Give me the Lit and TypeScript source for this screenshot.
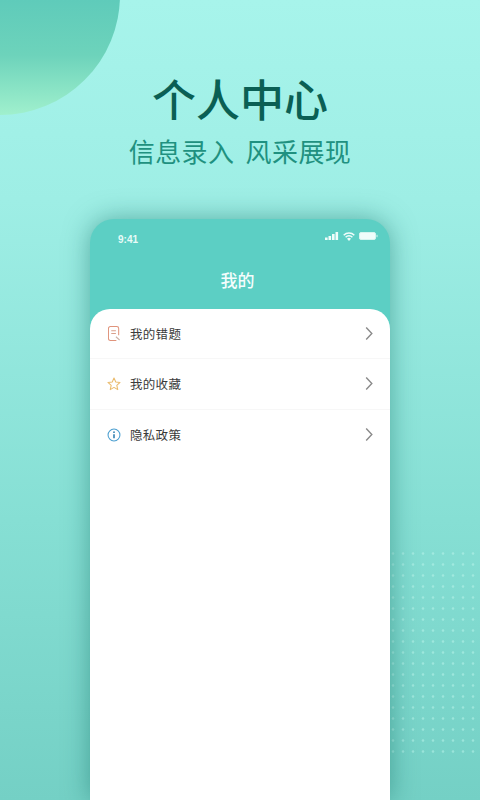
import { LitElement, html, css } from "lit";
import { customElement } from "lit/decorators.js";

const chevron = html`<svg class="chev" width="10" height="15" viewBox="0 0 10 16"><path d="M2 1.500 L8 8 L2 14.500" fill="none" stroke="#8a8a8a" stroke-width="1.500"/></svg>`;

const book = html`<svg width="13" height="15" viewBox="0 0 14 16" fill="none" stroke="#e0947c" stroke-width="1.100"><path d="M11.500 10V2.500a2 2 0 0 0-2-2h-7a2 2 0 0 0-2 2v11a2 2 0 0 0 2 2H9"/><path d="M3.500 5H8.500M3.500 8H8.500" stroke="#d9a08c"/><path d="M8.500 11.500 L12.500 15" stroke="#c9b0a5"/></svg>`;

const star = html`<svg width="14" height="14" viewBox="0 0 16 16" fill="none" stroke="#eabb6c" stroke-width="1.200" stroke-linejoin="round"><path d="M8 1.200 L10 5.700 L14.900 6.200 L11.200 9.500 L12.300 14.400 L8 11.900 L3.700 14.400 L4.800 9.500 L1.100 6.200 L6 5.700 Z"/></svg>`;

const info = html`<svg width="14" height="14" viewBox="0 0 16 16" fill="none"><circle cx="8" cy="8" r="6.800" stroke="#4b9fd0" stroke-width="1.200"/><circle cx="8" cy="4.800" r="1" fill="#2f7fb0"/><path d="M8 7v4.800" stroke="#2f7fb0" stroke-width="1.800"/></svg>`;

const rows = [
  { icon: book, label: "我的错题" },
  { icon: star, label: "我的收藏" },
  { icon: info, label: "隐私政策" },
];

@customElement("app-root")
export class AppRoot extends LitElement {
  static styles = css`
    :host {
      display: block;
      width: 480px;
      height: 800px;
      overflow: hidden;
      font-family: "Noto Sans CJK SC", "Liberation Sans", sans-serif;
    }
    .page {
      position: relative;
      box-sizing: border-box;
      width: 480px;
      height: 800px;
      overflow: hidden;
      display: flex;
      flex-direction: column;
      align-items: center;
      padding-top: 70px;
      background: linear-gradient(180deg, #a7f4eb 0%, #9eeee5 25%, #86dfd4 65%, #74d0c5 100%);
    }
    .circle {
      position: absolute;
      left: -120px;
      top: -125px;
      width: 240px;
      height: 240px;
      border-radius: 50%;
      background: linear-gradient(180deg, #5fcbba 52%, #6dd3bb 75%, #a0f0cd 100%);
    }
    .dots {
      position: absolute;
      left: 388px;
      top: 548px;
      width: 92px;
      height: 209px;
      background-image: radial-gradient(circle at 5px 5.500px, rgba(190, 245, 235, 0.5) 0, rgba(190, 245, 235, 0.5) 0.800px, transparent 1.700px);
      background-size: 10px 11px;
    }
    h1 {
      position: relative;
      margin: 0;
      font-size: 44px;
      line-height: 56px;
      font-weight: 500;
      letter-spacing: 0;
      color: #0a5f54;
    }
    h2 {
      position: relative;
      margin: 5px 0 0;
      font-size: 26px;
      line-height: 40px;
      font-weight: 400;
      letter-spacing: 0.400px;
      word-spacing: 5px;
      color: #1f9180;
      white-space: pre;
    }
    .phone {
      position: relative;
      margin-top: 48px;
      width: 300px;
      flex: 1;
      border-radius: 24px 24px 0 0;
      background: #5ccfc4;
      box-shadow: 0 0 26px rgba(20, 110, 100, 0.5);
      display: flex;
      flex-direction: column;
    }
    .status {
      height: 34px;
      box-sizing: border-box;
      padding: 6px 12px 0 28px;
      display: flex;
      align-items: center;
      justify-content: space-between;
      color: #e8fbf8;
      font-family: "Liberation Sans", sans-serif;
      font-size: 10px;
      font-weight: 700;
    }
    .status-icons {
      display: flex;
      align-items: center;
      gap: 4px;
      margin-top: -6px;
    }
    .title {
      height: 56px;
      display: flex;
      align-items: center;
      justify-content: center;
      color: #f4fdfc;
      font-size: 17px;
      font-weight: 500;
      padding: 0 5px 4px 0;
      box-sizing: border-box;
    }
    .sheet {
      flex: 1;
      background: #fff;
      border-radius: 20px 20px 0 0;
    }
    .row {
      height: 50.300px;
      box-sizing: border-box;
      padding: 0 16px 0 17px;
      display: flex;
      align-items: center;
      border-bottom: 1px solid #f7f7f7;
      font-size: 12.500px;
      font-weight: 400;
      color: #3a3a3a;
    }
    .row:last-child {
      border-bottom: none;
    }
    .icon {
      width: 14px;
      height: 16px;
      display: flex;
      align-items: center;
      justify-content: center;
      margin: 0 9px 0 0;
    }
    .label {
      flex: 1;
      letter-spacing: 0.300px;
    }
  `;

  render() {
    return html`
      <div class="page">
        <div class="circle"></div>
        <div class="dots"></div>
        <h1>个人中心</h1>
        <h2>信息录入 风采展现</h2>
        <div class="phone">
          <div class="status">
            <span>9:41</span>
            <span class="status-icons">
              <svg width="14" height="8" viewBox="0 0 14 8" fill="#f0fdfb"><rect x="0" y="5.500" width="2.600" height="2.500"/><rect x="3.500" y="4" width="2.600" height="4"/><rect x="7" y="2" width="2.600" height="6"/><rect x="10.500" y="0" width="2.600" height="8"/></svg>
              <svg width="12" height="9" viewBox="0 0 12 9" fill="none" stroke="#f0fdfb" stroke-width="1.500"><path d="M0.700 3.200A7.500 7.500 0 0 1 11.300 3.200"/><path d="M2.600 5.200A4.800 4.800 0 0 1 9.400 5.200"/><path d="M6 9 L4 6.800 A2.800 2.800 0 0 1 8 6.800 Z" fill="#f0fdfb" stroke="none"/></svg>
              <svg width="19" height="8" viewBox="0 0 19 8"><rect x="0.500" y="0.500" width="16" height="7" rx="1.500" fill="#f0fdfb" stroke="#d5f5f0"/><rect x="17.500" y="2.800" width="1" height="2.400" fill="#d5f5f0"/></svg>
            </span>
          </div>
          <div class="title">我的</div>
          <div class="sheet">
            ${rows.map(
              (r) => html`<div class="row"><span class="icon">${r.icon}</span><span class="label">${r.label}</span>${chevron}</div>`
            )}
          </div>
        </div>
      </div>
    `;
  }
}
